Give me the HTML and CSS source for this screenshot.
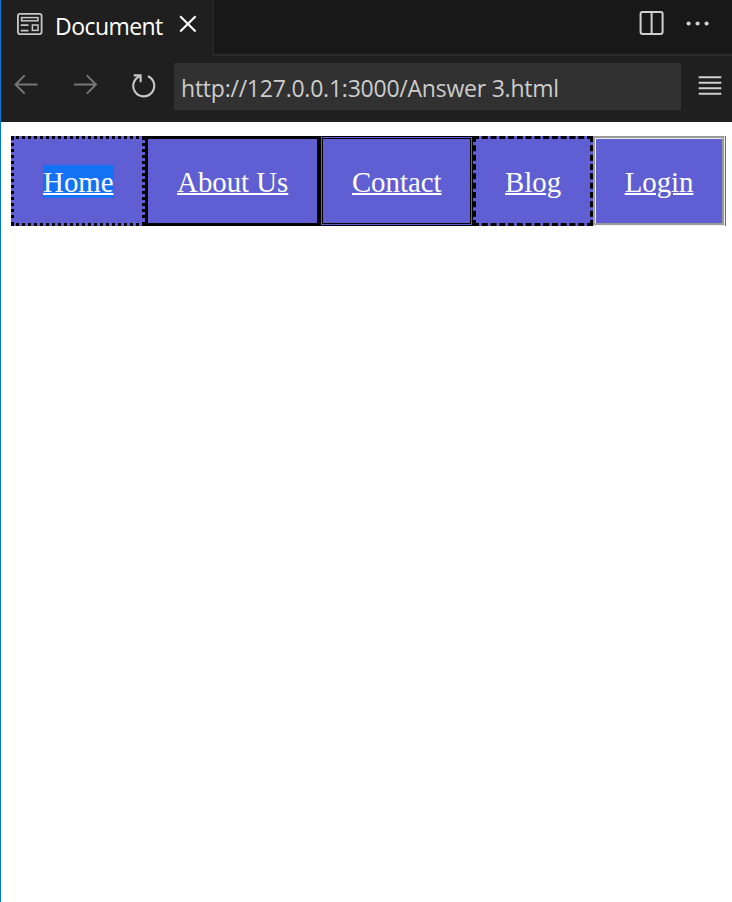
FILE: index.html
```html
<!DOCTYPE html>
<html lang="en">
<head>
<meta charset="utf-8">
<title>Document</title>
<link rel="stylesheet" href="styles.css">
</head>
<body>
<div class="window">
  <header class="tabbar">
    <div class="tab">
      <svg class="tab-icon" width="28" height="24" viewBox="0 0 28 24" fill="none" stroke="#c8c8c8" stroke-width="1.8">
        <rect x="1.9" y="1.9" width="23.7" height="20.2" rx="2"/>
        <rect x="5.6" y="5.6" width="16.4" height="3.2" stroke-width="1.5"/>
        <path d="M4.7 13.1h7.8M4.7 18.6h7.8" stroke-width="1.6"/>
        <rect x="16.4" y="13" width="5.6" height="5.4" stroke-width="1.5"/>
      </svg>
      <span class="tab-title">Document</span>
      <svg class="close" width="18" height="18" viewBox="0 0 18 18" stroke="#fff" stroke-width="2.1"><path d="M1.2 1.2l15.4 15.4M16.6 1.2L1.2 16.6"/></svg>
    </div>
    <div class="actions">
      <svg width="26" height="26" viewBox="0 0 26 26" fill="none" stroke="#d0d0d0" stroke-width="2"><rect x="1.600" y="1.900" width="22" height="22" rx="1.800"/><path d="M12.600 2v22"/></svg>
      <svg width="26" height="26" viewBox="0 0 26 26" fill="#d0d0d0"><circle cx="3.600" cy="13.500" r="2.100"/><circle cx="12.600" cy="13.500" r="2.100"/><circle cx="21.600" cy="13.500" r="2.100"/></svg>
    </div>
  </header>
  <div class="toolbar">
    <svg class="nav-icon" width="26" height="24" viewBox="0 0 26 24" fill="none" stroke="#777" stroke-width="1.9"><path d="M24.500 11.500H2.500M11.700 2.300L2.500 11.500l9.200 9.200"/></svg>
    <svg class="nav-icon forward" width="26" height="24" viewBox="0 0 26 24" fill="none" stroke="#777" stroke-width="1.900"><path d="M2 11.500H24M14.800 2.300L24 11.500l-9.200 9.200"/></svg>
    <svg class="reload" width="26" height="26" viewBox="0 0 26 26" fill="none" stroke="#c8c8c8" stroke-width="2.100"><path d="M2.700 3.400h6.900v6.900M9.400 3.900A10.500 10.500 0 1 0 16.900 4.200"/></svg>
    <div class="address">http://127.0.0.1:3000/Answer 3.html</div>
    <svg class="menu" width="24" height="22" viewBox="0 0 24 22" stroke="#d0d0d0" stroke-width="2"><path d="M.7 2.200h22.600M.7 7.700h22.600M.7 13.200h22.600M.7 18.700h22.600"/></svg>
  </div>
  <nav class="links">
    <a class="dotted" href="#"><span class="selected">Home</span></a>
    <a class="solid" href="#">About Us</a>
    <a class="double" href="#">Contact</a>
    <a class="dashed" href="#">Blog</a>
    <a class="groove" href="#">Login</a>
  </nav>
</div>
</body>
</html>
```
FILE: styles.css
```css
* { box-sizing: border-box; }
body { margin: 0; background: #fff; }
svg { display: block; flex: none; }
.window { height: 902px; overflow: hidden; border-left: 1px solid #0078d4; }
.tabbar {
  display: flex;
  justify-content: space-between;
  height: 56px;
  background: #181818;
  font-family: "Open Sans", sans-serif;
}
.tab {
  display: flex;
  width: 213px;
  padding-left: 15px;
  background: #1f1f1f;
  border-right: 1px solid #2b2b2b;
  color: #fff;
}
.tab-icon { margin-top: 12px; }
.tab-title {
  width: 107px;
  margin-left: 11px;
  font-size: 23px;
  line-height: 52px;
  letter-spacing: -0.55px;
  white-space: nowrap;
}
.close { margin: 15px 0 0 17px; }
.actions {
  display: flex;
  flex: 1;
  justify-content: flex-end;
  gap: 20px;
  padding: 10px 21px 0 0;
  border-bottom: 2px solid #2b2b2b;
}
.toolbar {
  display: flex;
  height: 66px;
  padding: 7px 10px 0 12px;
  background: #1f1f1f;
}
.nav-icon { margin-top: 10px; }
.forward { margin-left: 33px; }
.reload { margin: 9px 0 0 33px; }
.address {
  width: 507px;
  height: 47px;
  margin-left: 17px;
  padding-left: 7px;
  background: #313131;
  color: #ccc;
  font: 23px/51px "Open Sans", sans-serif;
  letter-spacing: -0.23px;
  white-space: nowrap;
}
.menu { margin: 12px 0 0 17px; }
.links { display: flex; padding: 14px 0 0 10px; }
.links a {
  height: 90px;
  padding: 27px 28.5px 0 29.1px;
  border: 3px solid #000;
  background: #5f5fd3;
  color: #fff;
  font: 28.8px/33px "Liberation Serif", serif;
  text-decoration-thickness: 2px;
  white-space: nowrap;
}
.links .selected {
  display: block;
  width: 71px;
  height: 33px;
  margin: -1px -0.6px 0 0;
  padding-top: 1px;
  background: #1472f6;
  line-height: 33px;
}
.links .dotted { border-style: dotted; }
.links .double { border-style: double; }
.links .dashed { border-style: dashed; }
.links .groove { border: 3px groove #eee; box-shadow: 1px 0 #5f5fd3; }
```
